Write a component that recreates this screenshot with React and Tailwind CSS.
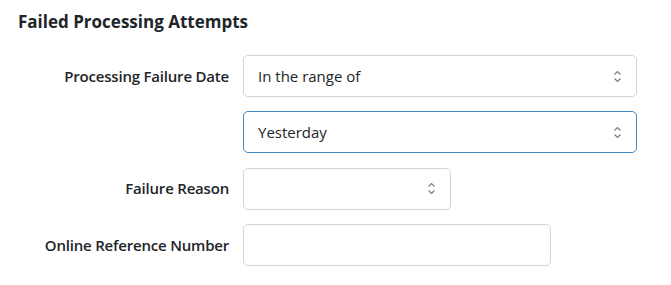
import React from 'react'

function Chevrons() {
  return (
    <svg width="9" height="15" viewBox="0 0 9 15" fill="none" className="shrink-0">
      <path d="M1.5 5.5 L4.5 2.5 L7.5 5.5" stroke="#7a7a7a" strokeWidth="1.1" />
      <path d="M1.5 9.5 L4.5 12.5 L7.5 9.5" stroke="#7a7a7a" strokeWidth="1.1" />
    </svg>
  )
}

function SelectBox({ value, width, focused }) {
  return (
    <div
      className={`h-[42px] flex items-center justify-between rounded-[5px] border bg-white pl-[14px] pr-[14px] text-[15px] text-[#212529]
        ${focused ? 'border-[#3d87c5]' : 'border-[#d1d5d9]'} ${width}`}
    >
      <span>{value}</span>
      <Chevrons />
    </div>
  )
}

function Row({ label, children }) {
  return (
    <div className="flex items-center gap-[14px]">
      <div className="w-[229px] text-right text-[15px] tracking-[-0.2px] font-semibold text-[#212529]">{label}</div>
      {children}
    </div>
  )
}

export default function App() {
  return (
    <div className="w-[671px] h-[285px] bg-white pl-[18px] pt-[10px]" style={{ fontFamily: '"Segoe UI", "Open Sans", sans-serif' }}>
      <h2 className="text-[17px] leading-[24px] font-bold text-[#212529]">Failed Processing Attempts</h2>

      <div className="mt-[21px] flex flex-col gap-[14.33px] -ml-[18px]">
        <Row label="Processing Failure Date">
          <SelectBox value="In the range of" width="w-[394px]" />
        </Row>
        <Row label="">
          <SelectBox value="Yesterday" width="w-[394px]" focused />
        </Row>
        <Row label="Failure Reason">
          <SelectBox value="" width="w-[208px]" />
        </Row>
        <Row label="Online Reference Number">
          <input
            type="text"
            className="h-[42px] w-[308px] rounded-[5px] border border-[#d1d5d9] bg-white px-[14px] text-[15px] outline-none"
          />
        </Row>
      </div>
    </div>
  )
}
